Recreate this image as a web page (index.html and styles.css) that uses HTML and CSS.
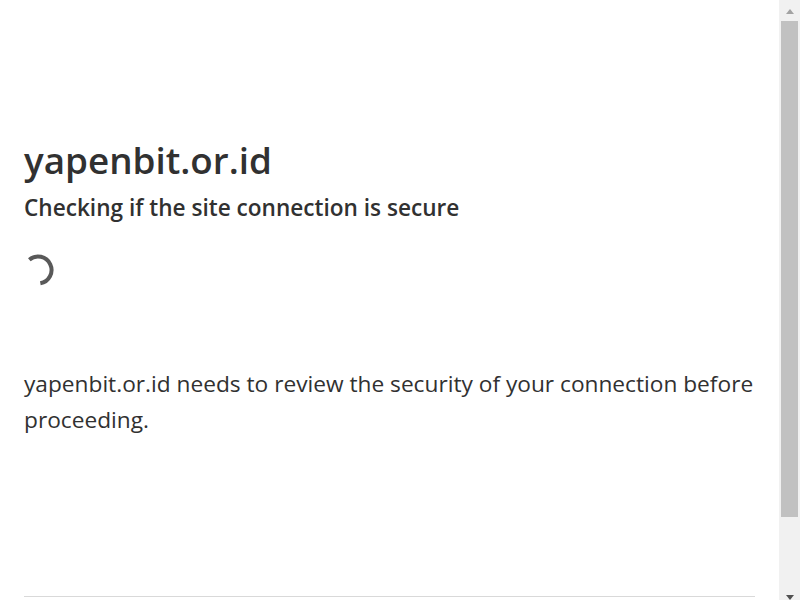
FILE: index.html
```html
<!DOCTYPE html>
<html lang="en">
<head>
<meta charset="utf-8">
<title>Just a moment...</title>
<link rel="stylesheet" href="styles.css">
</head>
<body>
<div class="page">
  <div class="main-wrapper">
    <div class="main-content">
      <h1 class="h1">yapenbit.or.id</h1>
      <h2 class="h2">Checking if the site connection is secure</h2>
      <div class="challenge-stage">
        <svg class="spinner" width="32" height="32" viewBox="0 0 32 32" aria-hidden="true">
          <path d="M7.32 5.66 A13.5 13.5 0 1 1 18.34 29.29" fill="none" stroke="#595959" stroke-width="4"/>
        </svg>
      </div>
      <div class="core-msg">yapenbit.or.id needs to review the security of your connection before proceeding.</div>
    </div>
  </div>
  <div class="footer">
    <div class="footer-inner"></div>
  </div>
</div>
<div class="scrollbar" aria-hidden="true">
  <div class="sb-btn"><span class="arrow-up"></span></div>
  <div class="sb-track"><div class="sb-thumb"></div></div>
  <div class="sb-btn sb-btn-down"><span class="arrow-down"></span></div>
</div>
</body>
</html>
```
FILE: styles.css
```css
* { box-sizing: border-box; margin: 0; padding: 0; }
html, body { height: 100%; overflow: hidden; }
body {
  font-family: "Open Sans", "Noto Sans", sans-serif;
  color: #313131;
  background: #fff;
  display: flex;
  flex-direction: row;
}
.page {
  flex: 1;
  min-width: 0;
  overflow: hidden;
}
.main-content {
  margin: 130px auto 0;
  max-width: 60rem;
  padding-left: 24px;
  padding-right: 24px;
  padding-bottom: 158px;
}
.h1 {
  font-size: 36.8px;
  line-height: 60px;
  font-weight: 600;
}
.h2 {
  font-size: 22.6px;
  line-height: 36px;
  font-weight: 600;
}
.challenge-stage {
  padding-top: 28px;
  height: 140px;
}
.spinner { display: block; margin-left: -2px; }
.core-msg {
  font-size: 22.7px;
  line-height: 36px;
}
.footer {
  max-width: 60rem;
  width: 100%;
  margin: 0 auto;
  padding: 0 24px;
}
.footer-inner {
  border-top: 1px solid #d9d9d9;
  height: 80px;
}
.scrollbar {
  flex: 0 0 21px;
  height: 100%;
  background: #f1f1f1;
  display: flex;
  flex-direction: column;
}
.sb-btn {
  height: 21px;
  display: flex;
  justify-content: center;
  padding-top: 9px;
  padding-left: 1px;
}
.sb-btn-down { padding-top: 16px; }
.arrow-up {
  width: 0; height: 0;
  border-left: 4.5px solid transparent;
  border-right: 4.5px solid transparent;
  border-bottom: 5px solid #a3a3a3;
}
.arrow-down {
  width: 0; height: 0;
  border-left: 4.5px solid transparent;
  border-right: 4.5px solid transparent;
  border-top: 5px solid #505050;
}
.sb-track {
  flex: 1;
  padding: 0 2px;
}
.sb-thumb {
  height: 496px;
  background: #c1c1c1;
}
```
